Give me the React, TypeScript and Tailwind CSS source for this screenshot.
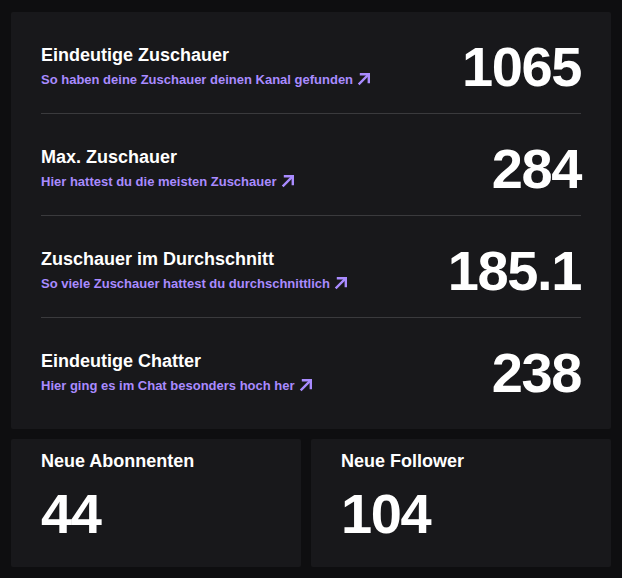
import React from "react";

const rows = [
  { title: "Eindeutige Zuschauer", sub: "So haben deine Zuschauer deinen Kanal gefunden", value: "1065" },
  { title: "Max. Zuschauer", sub: "Hier hattest du die meisten Zuschauer", value: "284" },
  { title: "Zuschauer im Durchschnitt", sub: "So viele Zuschauer hattest du durchschnittlich", value: "185.1" },
  { title: "Eindeutige Chatter", sub: "Hier ging es im Chat besonders hoch her", value: "238" },
];

function Arrow() {
  return (
    <svg width="14" height="14" viewBox="0 0 14 14" className="ml-[4px] shrink-0 -translate-y-[1px]" fill="none">
      <path d="M2.5 11.5L11 3" stroke="#a98bff" strokeWidth="2.4" strokeLinecap="square" />
      <path d="M4 2.2H11.8V10" stroke="#a98bff" strokeWidth="2.4" strokeLinecap="square" />
    </svg>
  );
}

export default function App() {
  return (
    <div
      className="min-h-[578px] w-[622px] bg-[#0e0e10] px-[11px] pt-[12px] pb-[11px] text-white"
      style={{ fontFamily: '"Liberation Sans", Arial, sans-serif' }}
    >
      <div className="bg-[#18181b] px-[30px] pb-[10px] rounded-[2px]">
        {rows.map((r, i) => (
          <div
            key={r.title}
            className={`flex items-center justify-between pt-[27px] pb-[18px] ${i < rows.length - 1 ? "border-b border-[#3a3a3d]" : ""}`}
          >
            <div className="flex flex-col">
              <div className="text-[18px] font-bold leading-[20px] text-white">{r.title}</div>
              <div className="mt-[6px] flex items-center text-[13px] font-bold leading-[18px] text-[#a98bff]">
                {r.sub}
                <Arrow />
              </div>
            </div>
            <div className="text-[56px] font-bold leading-[56px] tracking-tight">{r.value}</div>
          </div>
        ))}
      </div>
      <div className="mt-[10px] grid grid-cols-[290px_300px] gap-[10px]">
        {[
          { t: "Neue Abonnenten", v: "44" },
          { t: "Neue Follower", v: "104" },
        ].map((c) => (
          <div key={c.t} className="h-[128px] rounded-[2px] bg-[#18181b] px-[30px] pt-[11px]">
            <div className="text-[18px] font-bold leading-[22px]">{c.t}</div>
            <div className="mt-[14px] text-[56px] font-bold leading-[56px] tracking-tight">{c.v}</div>
          </div>
        ))}
      </div>
    </div>
  );
}
